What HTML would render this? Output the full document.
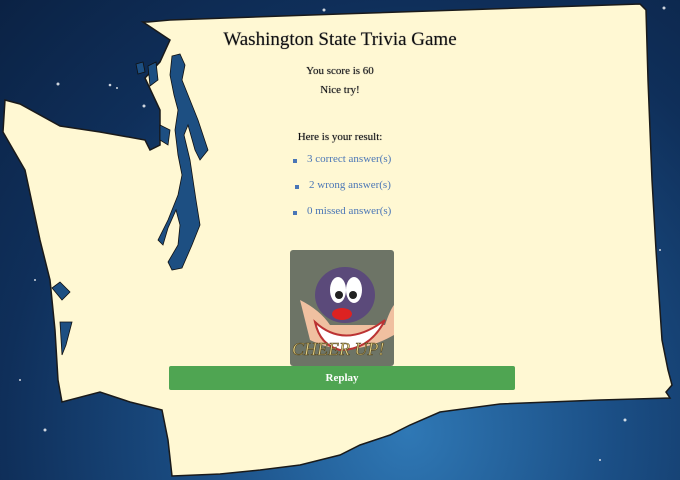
<!DOCTYPE html>
<html><head><meta charset="utf-8"><style>
html,body{margin:0;padding:0;width:680px;height:480px;overflow:hidden;}
body{position:relative;background:radial-gradient(ellipse at 60% 90%,#2f78b5 0%,#1b4f86 35%,#0f2f5a 70%,#0b2244 100%);font-family:"Liberation Serif",serif;}
svg.bg{position:absolute;left:0;top:0;}
.t{position:absolute;left:0;width:680px;text-align:center;color:#111;text-shadow:0 0 1px #888;}
.li{position:absolute;color:#4a76b6;font-size:11px;}
.li:before{content:"";position:absolute;left:-14px;top:6px;width:4px;height:4px;background:#4a76b6;}
.btn{position:absolute;left:169px;top:366px;width:346px;height:24px;background:#4fa552;border-radius:2px;color:#fff;font-weight:bold;font-size:11px;text-align:center;line-height:24px;}
</style></head><body>
<svg class="bg" width="680" height="480" viewBox="0 0 680 480">
<g fill="#fff" opacity="0.8">
<circle cx="58" cy="84" r="1.5"/><circle cx="110" cy="85" r="1.3"/><circle cx="144" cy="106" r="1.5"/><circle cx="117" cy="88" r="1"/><circle cx="324" cy="10" r="1.5"/><circle cx="664" cy="8" r="1.5"/><circle cx="45" cy="430" r="1.5"/><circle cx="625" cy="420" r="1.5"/><circle cx="660" cy="250" r="1"/><circle cx="35" cy="280" r="1"/><circle cx="20" cy="380" r="1"/><circle cx="600" cy="460" r="1"/>
</g>
<path d="M143,22 L148,22 L170,20 L340,14 L640,4 L646,10 L648,80 L652,180 L656,250 L662,340 L668,370 L672,385 L666,392 L670,398 L600,400 L500,404 L440,412 L410,425 L390,435 L360,445 L340,455 L320,460 L300,465 L260,470 L220,474 L172,476 L168,440 L162,410 L130,402 L100,392 L62,402 L58,380 L55,330 L50,280 L40,240 L25,170 L3,132 L5,100 L20,104 L60,126 L100,132 L145,140 L150,150 L160,145 L160,110 L145,78 L160,62 L170,40 Z" fill="#fff8d3" stroke="#1a1a1a" stroke-width="1.5"/>
<g fill="#1d4f82" stroke="#111" stroke-width="0.8">
<path d="M136,64 L143,62 L145,72 L138,74 Z"/>
<path d="M148,66 L156,62 L158,80 L150,86 Z"/>
<path d="M172,56 L180,54 L185,65 L182,80 L190,100 L198,120 L208,150 L200,160 L195,150 L188,125 L184,135 L190,160 L196,200 L200,225 L192,245 L182,268 L172,270 L168,262 L178,245 L180,225 L176,210 L168,228 L163,245 L158,240 L168,220 L178,195 L182,175 L178,155 L175,130 L178,110 L174,95 L170,75 Z"/>
<path d="M160,125 L170,130 L168,145 L160,140 Z"/>
<path d="M52,288 L60,282 L70,292 L62,300 Z"/>
<path d="M60,322 L72,322 L66,345 L62,355 Z"/>
</g>
</svg>
<div class="t" style="top:29px;font-size:19px;">Washington State Trivia Game</div>
<div class="t" style="top:65px;font-size:11px;">You score is 60</div>
<div class="t" style="top:84px;font-size:11px;">Nice try!</div>
<div class="t" style="top:131px;font-size:11px;">Here is your result:</div>
<div class="li" style="left:307px;top:153px;">3 correct answer(s)</div>
<div class="li" style="left:309px;top:179px;">2 wrong answer(s)</div>
<div class="li" style="left:307px;top:205px;">0 missed answer(s)</div>
<svg style="position:absolute;left:290px;top:250px;" width="104" height="116" viewBox="0 0 104 116">
<rect width="104" height="116" rx="3" fill="#6d7466"/>
<ellipse cx="55" cy="45" rx="30" ry="28" fill="#5b4a7a"/>
<ellipse cx="48" cy="40" rx="8" ry="13" fill="#fff"/><ellipse cx="64" cy="40" rx="8" ry="13" fill="#fff"/>
<circle cx="49" cy="45" r="4" fill="#222"/><circle cx="63" cy="45" r="4" fill="#222"/>
<path d="M10,50 Q30,60 40,75 L95,75 Q100,60 104,55 L104,85 Q60,110 20,90 Z" fill="#f0c0a0"/>
<path d="M25,72 Q55,100 95,70 Q80,100 50,100 Q30,95 25,72 Z" fill="#fff" stroke="#b33" stroke-width="2"/>
<ellipse cx="52" cy="64" rx="10" ry="6" fill="#d22"/>
<text x="2" y="105" font-family="Liberation Serif,serif" font-size="18" fill="#e6d58a" stroke="#5a4a20" stroke-width="0.6" font-style="italic">CHEER UP!</text>
</svg>
<div class="btn">Replay</div>
</body></html>
